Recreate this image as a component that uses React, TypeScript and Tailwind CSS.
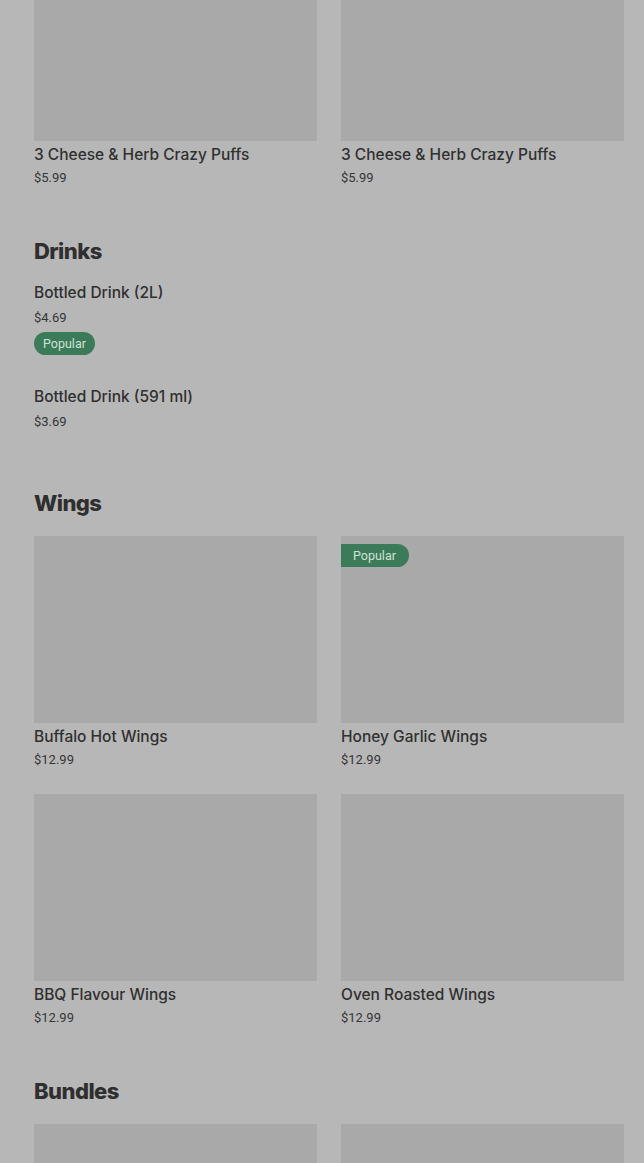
type Item = { name: string; price: string; popular?: boolean };

const puffs: Item[] = [
  { name: "3 Cheese & Herb Crazy Puffs", price: "$5.99" },
  { name: "3 Cheese & Herb Crazy Puffs", price: "$5.99" },
];

const drinks: Item[] = [
  { name: "Bottled Drink (2L)", price: "$4.69", popular: true },
  { name: "Bottled Drink (591 ml)", price: "$3.69" },
];

const wings: Item[] = [
  { name: "Buffalo Hot Wings", price: "$12.99" },
  { name: "Honey Garlic Wings", price: "$12.99", popular: true },
  { name: "BBQ Flavour Wings", price: "$12.99" },
  { name: "Oven Roasted Wings", price: "$12.99" },
];

function SectionTitle({ children }: { children: string }) {
  return (
    <h2 className="text-[22px] leading-7 font-extrabold tracking-tight text-[#2f2f2f] font-['Inter',sans-serif]">
      {children}
    </h2>
  );
}

function Card({ item, imgClass }: { item: Item; imgClass: string }) {
  return (
    <div className="flex flex-col">
      <div className={`relative bg-[#a9a9a9] ${imgClass}`}>
        {item.popular && (
          <span className="absolute top-2 left-0 rounded-r-full bg-[#3b7b59] pl-3 pr-[13px] text-[12.5px] leading-[23px] text-[#cfe2d6] font-['Roboto',sans-serif]">
            Popular
          </span>
        )}
      </div>
      <p className="mt-1 text-[15.5px] leading-5 font-medium text-[#303030] font-['Inter',sans-serif]">
        {item.name}
      </p>
      <p className="mt-1 text-[13px] leading-[18px] text-[#363636] font-['Roboto',sans-serif]">
        {item.price}
      </p>
    </div>
  );
}

export default function App() {
  return (
    <div className="h-[1163px] w-[644px] overflow-hidden bg-[#b7b7b7] pl-[34px] pr-[20px]">
      <div className="grid grid-cols-2 gap-x-6">
        {puffs.map((p, i) => (
          <Card key={i} item={p} imgClass="h-[141px]" />
        ))}
      </div>

      <div className="mt-[50px]">
        <SectionTitle>Drinks</SectionTitle>
        <div className="mt-[18px] flex flex-col">
          {drinks.map((d, i) => (
            <div key={i} className={i > 0 ? "mt-8" : ""}>
              <p className="text-[15.5px] leading-5 font-medium text-[#303030] font-['Inter',sans-serif]">
                {d.name}
              </p>
              <p className="mt-1.5 text-[13px] leading-[18px] text-[#363636] font-['Roboto',sans-serif]">
                {d.price}
              </p>
              {d.popular && (
                <span className="mt-[5px] inline-block rounded-full bg-[#3b7b59] px-[9px] text-[12.5px] leading-[23px] text-[#cfe2d6] font-['Roboto',sans-serif]">
                  Popular
                </span>
              )}
            </div>
          ))}
        </div>
      </div>

      <div className="mt-[58px]">
        <SectionTitle>Wings</SectionTitle>
        <div className="mt-[19px] grid grid-cols-2 gap-x-6 gap-y-[25px]">
          {wings.map((w, i) => (
            <Card key={i} item={w} imgClass="h-[187px]" />
          ))}
        </div>
      </div>

      <div className="mt-[50px]">
        <SectionTitle>Bundles</SectionTitle>
        <div className="mt-[19px] grid grid-cols-2 gap-x-6">
          <div className="h-[187px] bg-[#a9a9a9]" />
          <div className="h-[187px] bg-[#a9a9a9]" />
        </div>
      </div>
    </div>
  );
}
